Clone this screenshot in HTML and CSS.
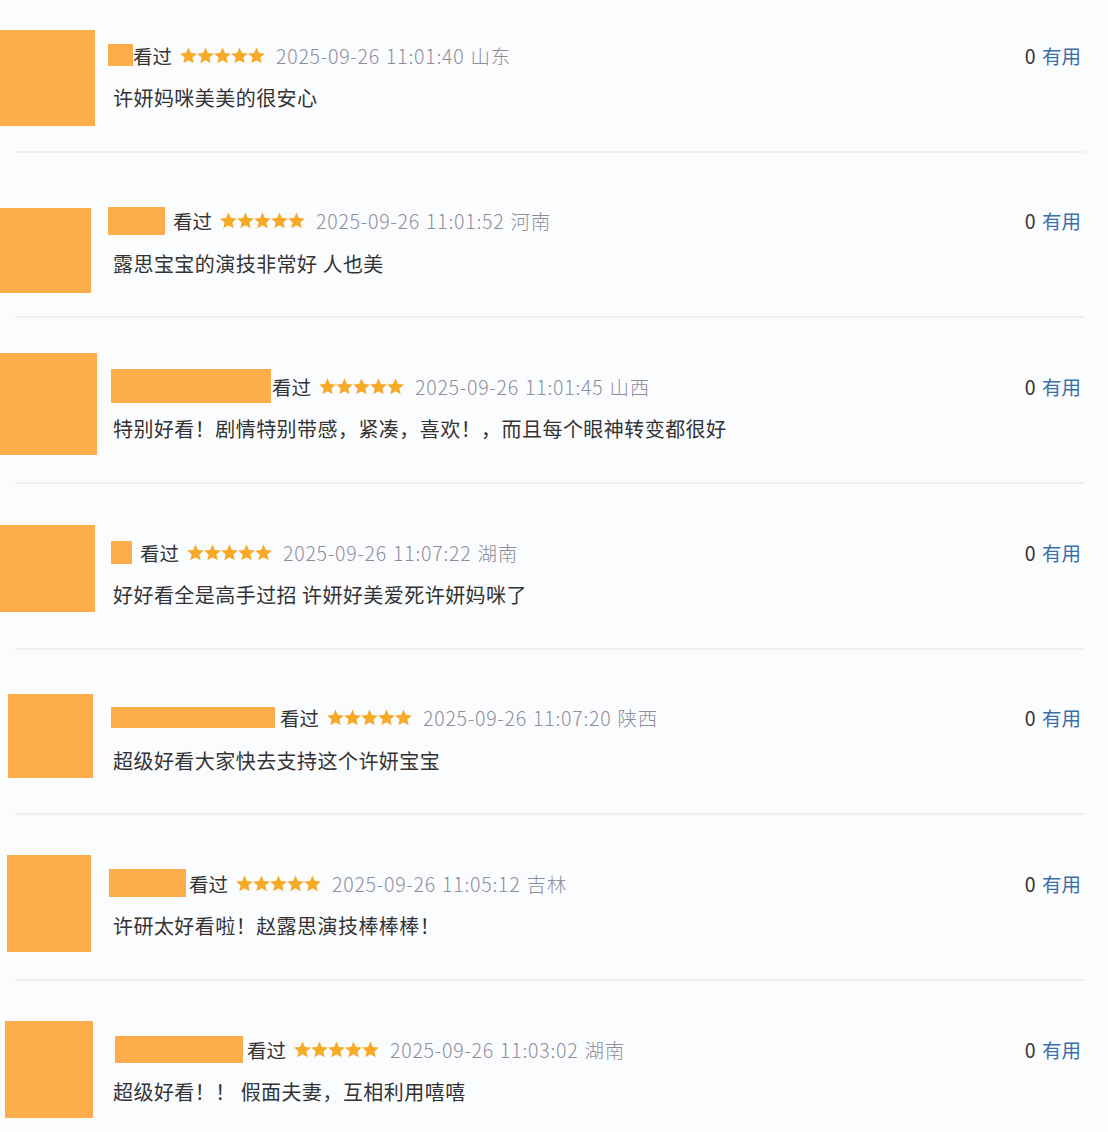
FILE: index.html
```html
<!DOCTYPE html>
<html>
<head>
  <meta charset="utf-8">
  <link rel="stylesheet" href="styles.css">
</head>
<body>
  <svg class="defs" width="0" height="0">
    <symbol id="star" viewBox="0 0 17 17">
      <polygon points="8.5,0.4 10.91,5.88 16.87,6.48 12.4,10.47 13.67,16.32 8.5,13.3 3.33,16.32 4.6,10.47 0.13,6.48 6.09,5.88" />
    </symbol>
  </svg>

  <div class="list">

    <div class="item">
      <div class="main">
        <div class="avatar-col"><div class="blot" style="margin-top:43px;width:95px;height:96px"></div></div>
        <div class="content">
          <div class="head">
            <span class="blot" style="margin-left:0;width:25px;height:22px;margin-right:0"></span>
            <span class="seen">看过</span>
            <svg class="stars" width="85" height="17"><use href="#star" x="0" width="17" height="17"/><use href="#star" x="17" width="17" height="17"/><use href="#star" x="34" width="17" height="17"/><use href="#star" x="51" width="17" height="17"/><use href="#star" x="68" width="17" height="17"/></svg>
            <span class="time">2025-09-26 11:01:40 山东</span>
            <span class="vote">0 <a class="useful">有用</a></span>
          </div>
          <p class="text">许妍妈咪美美的很安心</p>
        </div>
      </div>
      <div class="sep"></div>
    </div>

    <div class="item">
      <div class="main">
        <div class="avatar-col"><div class="blot" style="margin-top:55px;width:91px;height:85px"></div></div>
        <div class="content">
          <div class="head">
            <span class="blot" style="margin-left:0;width:57px;height:28px;margin-right:8px"></span>
            <span class="seen">看过</span>
            <svg class="stars" width="85" height="17"><use href="#star" x="0" width="17" height="17"/><use href="#star" x="17" width="17" height="17"/><use href="#star" x="34" width="17" height="17"/><use href="#star" x="51" width="17" height="17"/><use href="#star" x="68" width="17" height="17"/></svg>
            <span class="time">2025-09-26 11:01:52 河南</span>
            <span class="vote">0 <a class="useful">有用</a></span>
          </div>
          <p class="text">露思宝宝的演技非常好 人也美</p>
        </div>
      </div>
      <div class="sep"></div>
    </div>

    <div class="item">
      <div class="main">
        <div class="avatar-col"><div class="blot" style="margin-top:35px;width:97px;height:102px"></div></div>
        <div class="content">
          <div class="head">
            <span class="blot" style="margin-left:3px;width:160px;height:34px;margin-right:1px"></span>
            <span class="seen">看过</span>
            <svg class="stars" width="85" height="17"><use href="#star" x="0" width="17" height="17"/><use href="#star" x="17" width="17" height="17"/><use href="#star" x="34" width="17" height="17"/><use href="#star" x="51" width="17" height="17"/><use href="#star" x="68" width="17" height="17"/></svg>
            <span class="time">2025-09-26 11:01:45 山西</span>
            <span class="vote">0 <a class="useful">有用</a></span>
          </div>
          <p class="text">特别好看！剧情特别带感，紧凑，喜欢！，而且每个眼神转变都很好</p>
        </div>
      </div>
      <div class="sep"></div>
    </div>

    <div class="item">
      <div class="main">
        <div class="avatar-col"><div class="blot" style="margin-top:41px;width:95px;height:87px"></div></div>
        <div class="content">
          <div class="head">
            <span class="blot" style="margin-left:3px;width:21px;height:23px;margin-right:8px"></span>
            <span class="seen">看过</span>
            <svg class="stars" width="85" height="17"><use href="#star" x="0" width="17" height="17"/><use href="#star" x="17" width="17" height="17"/><use href="#star" x="34" width="17" height="17"/><use href="#star" x="51" width="17" height="17"/><use href="#star" x="68" width="17" height="17"/></svg>
            <span class="time">2025-09-26 11:07:22 湖南</span>
            <span class="vote">0 <a class="useful">有用</a></span>
          </div>
          <p class="text">好好看全是高手过招 许妍好美爱死许妍妈咪了</p>
        </div>
      </div>
      <div class="sep"></div>
    </div>

    <div class="item">
      <div class="main">
        <div class="avatar-col"><div class="blot" style="margin-top:44px;margin-left:8px;width:85px;height:84px"></div></div>
        <div class="content">
          <div class="head">
            <span class="blot" style="margin-left:3px;width:164px;height:21px;margin-right:5px"></span>
            <span class="seen">看过</span>
            <svg class="stars" width="85" height="17"><use href="#star" x="0" width="17" height="17"/><use href="#star" x="17" width="17" height="17"/><use href="#star" x="34" width="17" height="17"/><use href="#star" x="51" width="17" height="17"/><use href="#star" x="68" width="17" height="17"/></svg>
            <span class="time">2025-09-26 11:07:20 陕西</span>
            <span class="vote">0 <a class="useful">有用</a></span>
          </div>
          <p class="text">超级好看大家快去支持这个许妍宝宝</p>
        </div>
      </div>
      <div class="sep"></div>
    </div>

    <div class="item">
      <div class="main">
        <div class="avatar-col"><div class="blot" style="margin-top:40px;margin-left:7px;width:84px;height:97px"></div></div>
        <div class="content">
          <div class="head">
            <span class="blot" style="margin-left:1px;width:77px;height:28px;margin-right:3px"></span>
            <span class="seen">看过</span>
            <svg class="stars" width="85" height="17"><use href="#star" x="0" width="17" height="17"/><use href="#star" x="17" width="17" height="17"/><use href="#star" x="34" width="17" height="17"/><use href="#star" x="51" width="17" height="17"/><use href="#star" x="68" width="17" height="17"/></svg>
            <span class="time">2025-09-26 11:05:12 吉林</span>
            <span class="vote">0 <a class="useful">有用</a></span>
          </div>
          <p class="text">许研太好看啦！赵露思演技棒棒棒！</p>
        </div>
      </div>
      <div class="sep"></div>
    </div>

    <div class="item">
      <div class="main">
        <div class="avatar-col"><div class="blot" style="margin-top:40px;margin-left:5px;width:88px;height:97px"></div></div>
        <div class="content">
          <div class="head">
            <span class="blot" style="margin-left:7px;width:128px;height:27px;margin-right:4px"></span>
            <span class="seen">看过</span>
            <svg class="stars" width="85" height="17"><use href="#star" x="0" width="17" height="17"/><use href="#star" x="17" width="17" height="17"/><use href="#star" x="34" width="17" height="17"/><use href="#star" x="51" width="17" height="17"/><use href="#star" x="68" width="17" height="17"/></svg>
            <span class="time">2025-09-26 11:03:02 湖南</span>
            <span class="vote">0 <a class="useful">有用</a></span>
          </div>
          <p class="text">超级好看！！ 假面夫妻，互相利用嘻嘻</p>
        </div>
      </div>
    </div>

  </div>
</body>
</html>
```

FILE: styles.css
```css
body, html {
  margin: 0;
  height: 100%;
  background-color: #fbfcfe;
  font-family: "Noto Sans CJK SC", "Noto Sans", sans-serif;
  overflow: hidden;
}
.defs {
  position: absolute;
}
.list {
  margin-top: -13px;
}
.item {
  height: 165.7px;
  display: flex;
  flex-direction: column;
}
.main {
  flex: 1;
  display: flex;
  align-items: flex-start;
  padding-right: 27px;
}
.avatar-col {
  width: 108px;
  flex-shrink: 0;
}
.blot {
  display: block;
  background-color: #fdad4b;
  flex-shrink: 0;
}
.content {
  flex: 1;
  padding-top: 53px;
}
.head {
  height: 30px;
  display: flex;
  align-items: center;
  font-size: 19.5px;
  color: #333;
}
.seen {
  margin-right: 8px;
}
.stars {
  fill: #f7a928;
  margin-right: 11px;
  flex-shrink: 0;
}
.time {
  color: #8d8e9b;
  font-weight: 300;
  letter-spacing: 0.75px;
  word-spacing: 1px;
}
.vote {
  margin-left: auto;
  color: #333;
}
.useful {
  color: #3c6fa8;
  margin-left: 2px;
}
.text {
  margin: 13px 0 0 5px;
  line-height: 30px;
  font-size: 20px;
  letter-spacing: 0.45px;
  color: #333;
}
.sep {
  height: 2px;
  margin: 0 23px 0 15px;
  background-color: #eef0f4;
}
```
